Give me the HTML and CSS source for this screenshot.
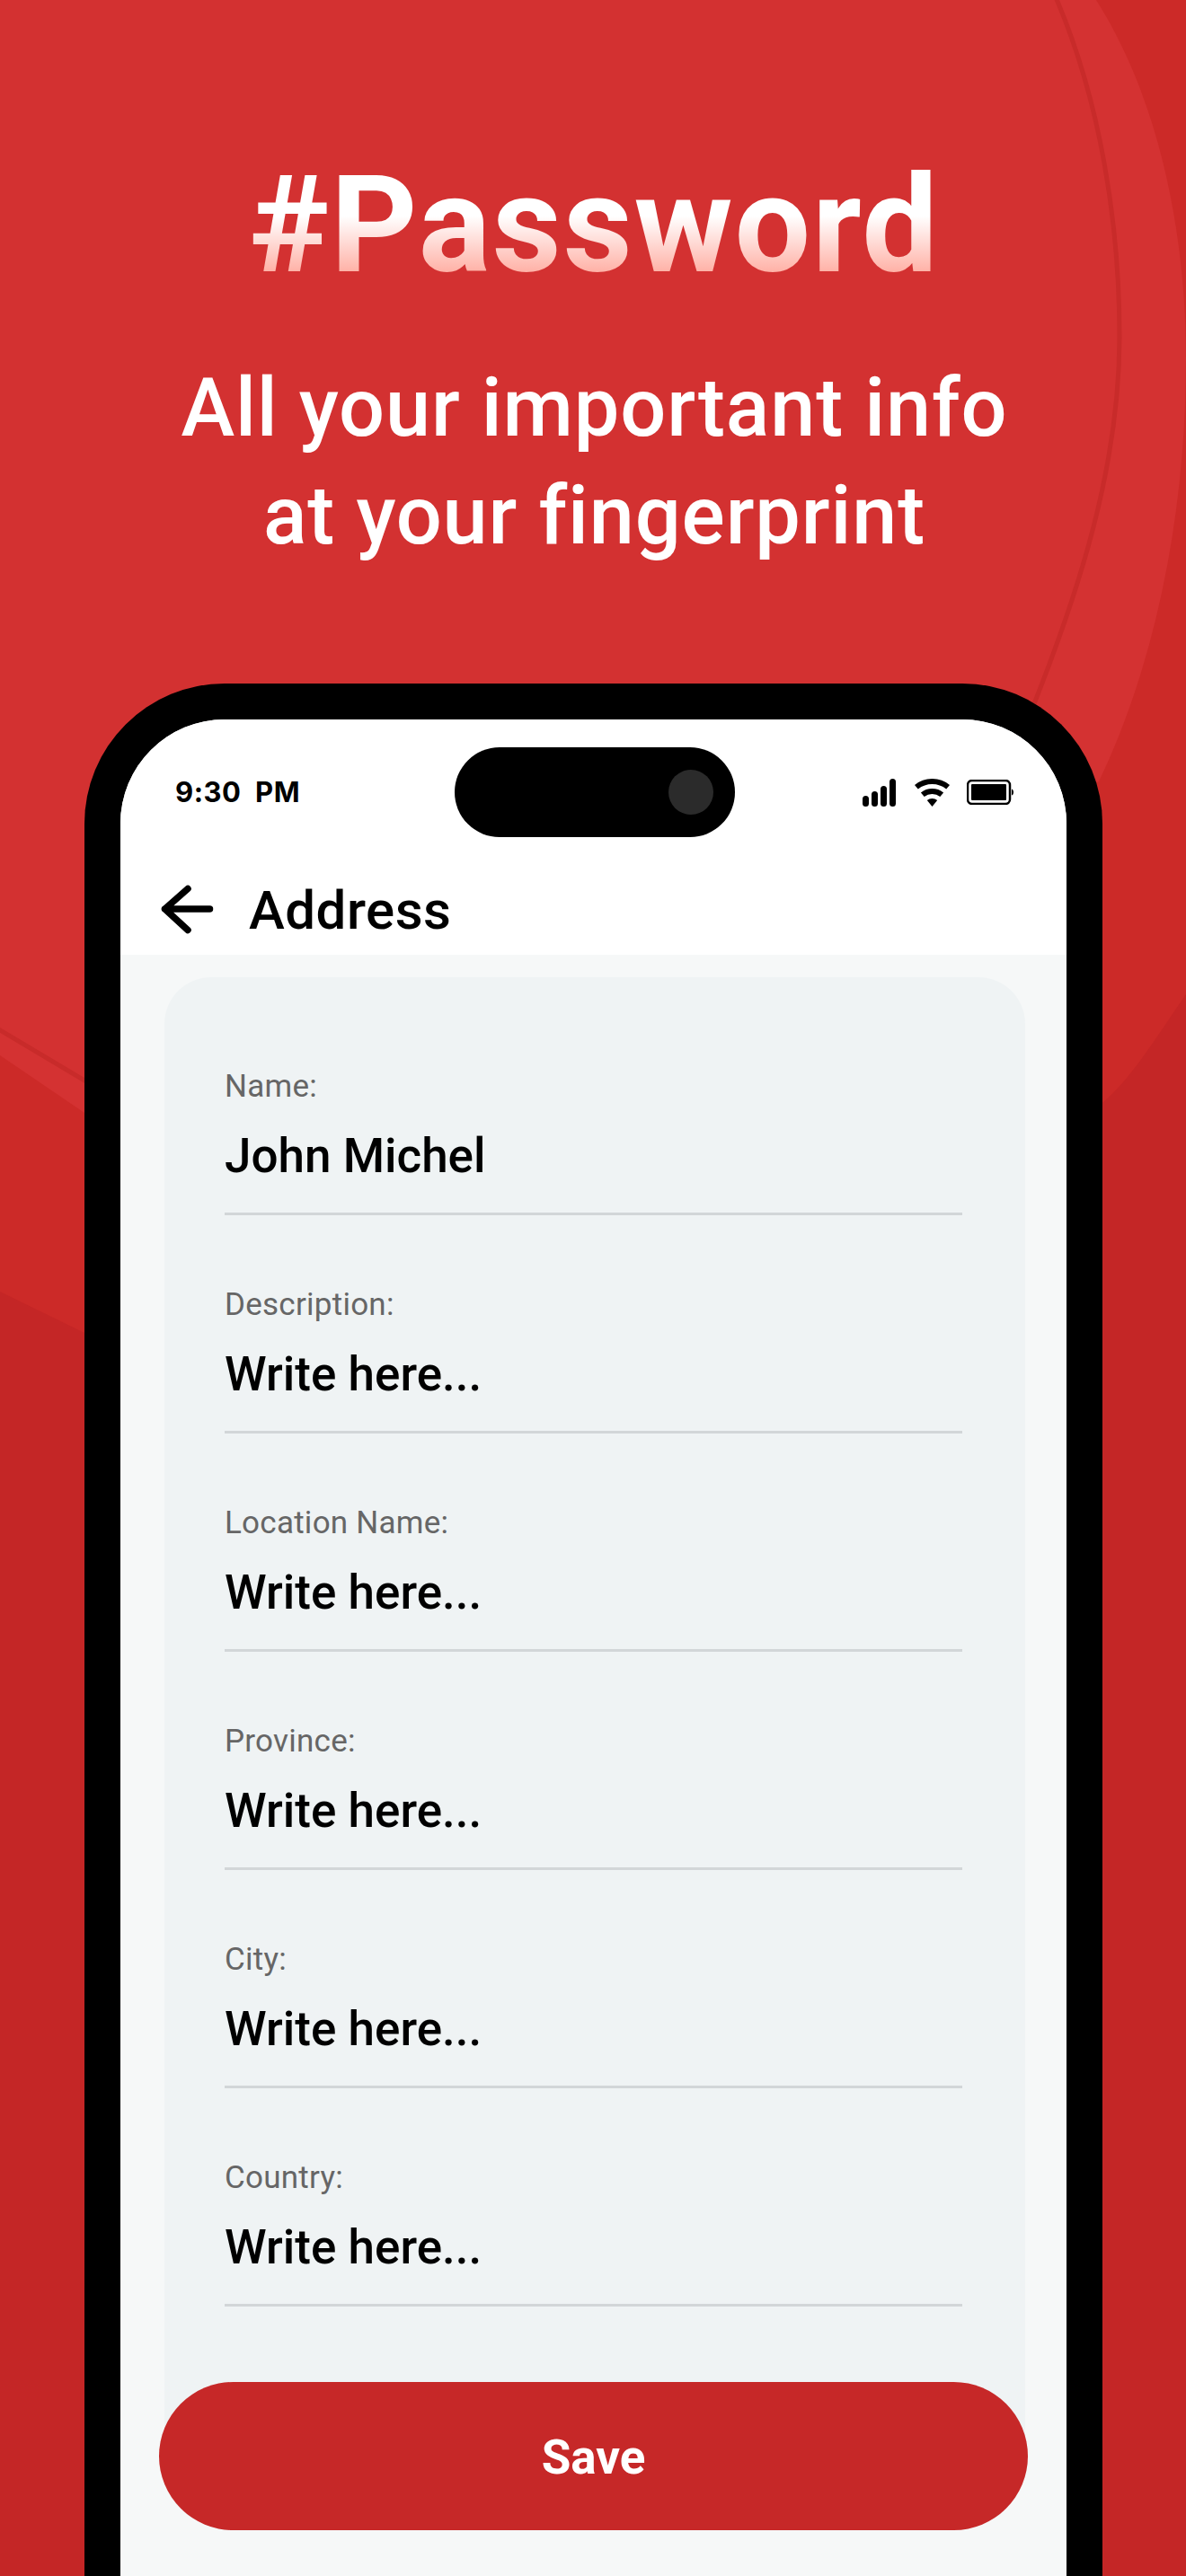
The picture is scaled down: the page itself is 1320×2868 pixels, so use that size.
FILE: index.html
```html
<!DOCTYPE html>
<html lang="en">
<head>
<meta charset="utf-8">
<title>#Password</title>
<link rel="stylesheet" href="styles.css">
</head>
<body>
<main class="page">
  <svg class="backdrop" viewBox="0 0 1320 2868" aria-hidden="true">
    <rect class="bg-base" width="1320" height="2868"/>
    <path class="bg-mid" d="M0 0H1320V1107C1290 1150 1260 1200 1227 1228L94 1484L0 1438Z"/>
    <path class="bg-light" d="M0 0H1220C1290 110 1320 260 1320 400C1320 560 1290 730 1223 870L94 1239L0 1175Z"/>
    <path class="bg-inner" d="M-10 -10H1172C1225 110 1246 250 1246 375C1246 520 1200 660 1150 786L94 1203L-10 1141Z"/>
  </svg>

  <header class="hero">
    <h1 class="hero-title">#Password</h1>
    <p class="hero-sub">All your important info<br>at your fingerprint</p>
  </header>

  <section class="phone">
    <div class="screen">
      <div class="top">
        <div class="status">
          <span class="time">9:30&nbsp; PM</span>
          <div class="island"><span class="camera"></span></div>
          <div class="status-icons">
            <svg class="i-signal" viewBox="0 0 37 31" aria-hidden="true">
              <rect x="0" y="19" width="7" height="12" rx="3.5"/>
              <rect x="10" y="14" width="7" height="17" rx="3.5"/>
              <rect x="20" y="8" width="7" height="23" rx="3.5"/>
              <rect x="30" y="0" width="7" height="31" rx="3.5"/>
            </svg>
            <svg class="i-wifi" viewBox="0 0 39 31" aria-hidden="true">
              <path d="M0 6.9A31 31 0 0 1 39 6.9L35.2 11.6A25 25 0 0 0 3.8 11.6Z"/>
              <path d="M6.9 15.5A20 20 0 0 1 32.1 15.5L28.3 20.1A14 14 0 0 0 10.7 20.1Z"/>
              <path d="M13.8 24A9 9 0 0 1 25.2 24L19.5 31Z"/>
            </svg>
            <svg class="i-battery" viewBox="0 0 52 28" aria-hidden="true">
              <rect class="bat-shell" x="1" y="1" width="47" height="26" rx="5"/>
              <rect x="5" y="5" width="39" height="18" rx="1"/>
              <path d="M50 10.5C51.5 11 52 12.5 52 14C52 15.500 51.500 17 50 17.500Z"/>
            </svg>
          </div>
        </div>
        <nav class="nav">
          <svg class="i-back" viewBox="0 0 60 60" aria-hidden="true">
            <path d="M54.500 30H4.500M30 7.500L4.500 30L30 53.500"/>
          </svg>
          <h2 class="nav-title">Address</h2>
        </nav>
      </div>

      <div class="content">
        <form class="card">
          <div class="field"><span class="label">Name:</span><span class="value">John Michel</span></div>
          <div class="field"><span class="label">Description:</span><span class="value">Write here...</span></div>
          <div class="field"><span class="label">Location Name:</span><span class="value">Write here...</span></div>
          <div class="field"><span class="label">Province:</span><span class="value">Write here...</span></div>
          <div class="field"><span class="label">City:</span><span class="value">Write here...</span></div>
          <div class="field"><span class="label">Country:</span><span class="value">Write here...</span></div>
        </form>
        <button class="save" type="button">Save</button>
      </div>
    </div>
  </section>
</main>
</body>
</html>
```

FILE: styles.css
```css
* { box-sizing: border-box; margin: 0; padding: 0; }

html, body { width: 1320px; height: 2868px; overflow: hidden; }

body { font-family: Roboto, "Liberation Sans", sans-serif; color: #000; background: #c62828; }

.page { position: relative; width: 1320px; height: 2868px; overflow: hidden; }

.backdrop { position: absolute; inset: 0; width: 1320px; height: 2868px; display: block; }
.bg-base { fill: #c42626; }
.bg-mid { fill: #cc2a28; }
.bg-light { fill: #d43232; }
.bg-inner { fill: #d33131; stroke: #c82b2a; stroke-width: 5; }

.hero { position: relative; padding: 163px 0 0 3px; text-align: center; color: #fff; }

.hero-title {
  font-size: 150px;
  line-height: 176px;
  font-weight: 700;
  letter-spacing: 1.8px;
  background: linear-gradient(180deg, #fff 44%, #ffb0a5 80%);
  -webkit-background-clip: text;
  background-clip: text;
  color: transparent;
}

.hero-sub { margin-top: 56px; font-size: 90px; line-height: 120px; font-weight: 500; letter-spacing: 0.85px; }

.phone {
  position: relative;
  width: 1133px;
  margin: 126px 0 0 94px;
  border: 40px solid #000;
  border-bottom: 0;
  border-radius: 156px 156px 0 0;
  background: #000;
}

.screen { border-radius: 116px 116px 0 0; overflow: hidden; background: #f6f8f8; }

.top { background: #fff; height: 262px; padding-top: 31px; }

.status { display: grid; grid-template-columns: 1fr 312px 1fr; align-items: center; padding: 0 59px 0 61px; }

.time { font-family: Inter, Roboto, sans-serif; font-size: 31px; font-weight: 700; line-height: 100px; letter-spacing: 0.5px; }

.island { height: 100px; border-radius: 50px; background: #000; display: flex; justify-content: flex-end; align-items: center; padding-right: 24px; }

.camera { width: 50px; height: 50px; border-radius: 50%; background: #2b2b2b; }

.status-icons { display: flex; justify-content: flex-end; align-items: center; }
.status-icons svg { display: block; fill: #000; }
.i-signal { width: 37px; height: 31px; margin-right: 21px; }
.i-wifi { width: 39px; height: 31px; margin-right: 19px; }
.i-battery { width: 52px; height: 28px; }
.bat-shell { fill: none; stroke: #000; stroke-width: 2.5; }

.nav { display: flex; align-items: center; height: 60px; margin-top: 50px; padding-left: 45px; }

.i-back { width: 60px; height: 60px; fill: none; stroke: #000; stroke-width: 7.5; stroke-linecap: round; stroke-linejoin: round; margin-right: 38px; }

.nav-title { font-size: 60px; line-height: 60px; font-weight: 500; letter-spacing: 0.5px; padding-top: 3px; }

.content { position: relative; padding: 25px 46px 100px 49px; }

.card { display: flex; flex-direction: column; gap: 80px; padding: 102px 70px 200px 67px; background: #eff3f4; border-radius: 52px; }

.field { display: flex; flex-direction: column; border-bottom: 3px solid #d2d6d8; padding-bottom: 33px; }

.label { font-size: 35px; line-height: 40px; color: #666; letter-spacing: 0.25px; }

.value { margin-top: 25px; font-size: 53px; line-height: 62px; font-weight: 500; padding-top: 1px; margin-bottom: -1px; }

.save {
  position: absolute;
  left: 43px;
  bottom: 51px;
  width: 967px;
  height: 165px;
  border: 0;
  border-radius: 83px;
  background: #c62828;
  color: #fff;
  font-family: inherit;
  font-size: 53px;
  font-weight: 700;
  padding-top: 3px;
}
```
